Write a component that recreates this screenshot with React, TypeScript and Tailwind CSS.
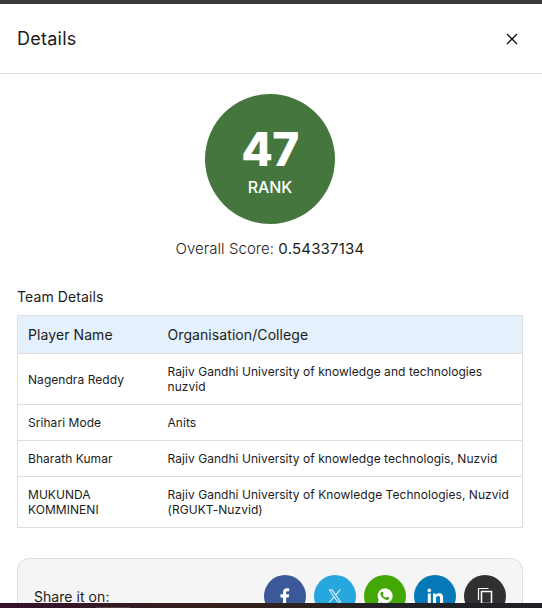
import type { ReactNode } from "react";

const players = [
  { name: "Nagendra Reddy", org: "Rajiv Gandhi University of knowledge and technologies nuzvid", height: "h-[51px]" },
  { name: "Srihari Mode", org: "Anits", height: "h-[36px]" },
  { name: "Bharath Kumar", org: "Rajiv Gandhi University of knowledge technologis, Nuzvid", height: "h-[36px]" },
  { name: "MUKUNDA KOMMINENI", org: "Rajiv Gandhi University of Knowledge Technologies, Nuzvid (RGUKT-Nuzvid)", height: "h-[51px]" },
];

function ShareButton({ label, color, children }: { label: string; color: string; children: ReactNode }) {
  return (
    <button aria-label={label} className={`flex size-[42px] shrink-0 items-center justify-center rounded-full text-white ${color}`}>
      {children}
    </button>
  );
}

export default function App() {
  return (
    <div className="flex h-[608px] w-[542px] flex-col overflow-hidden bg-white font-['Inter',sans-serif] text-[#1c1c1c]">
      <div className="h-1 shrink-0 bg-[#3b3b3b]" />
      <header className="flex h-[70px] shrink-0 items-center justify-between border-b border-[#dadada] pr-6 pl-[17px]">
        <h1 className="text-[18px] tracking-[0.25px]">Details</h1>
        <button aria-label="Close">
          <svg width="12" height="12" viewBox="0 0 12 12" fill="none" stroke="#111" strokeWidth="1.3">
            <path d="M1 1l10 10M11 1L1 11" />
          </svg>
        </button>
      </header>
      <main className="flex h-[529px] shrink-0 flex-col overflow-hidden px-[17px] pt-5 pr-[19px]">
        <div className="flex flex-col items-center">
          <div className="flex size-[130px] flex-col items-center rounded-full bg-[#45763d] pt-[32px] text-white">
            <span className="text-[46px] leading-[46px] font-extrabold tracking-[-0.6px]">47</span>
            <span className="mt-[5px] text-[16px] leading-5 font-medium tracking-[-0.1px]">RANK</span>
          </div>
          <p className="mt-[15px] text-[15px] leading-5 font-light tracking-[0.05px]">
            Overall Score: <span className="font-normal tracking-[0.2px]">0.54337134</span>
          </p>
        </div>
        <h2 className="mt-[28px] text-[14px] leading-5 tracking-[0.1px]">Team Details</h2>
        <div className="mt-[8px] border border-[#dfdfdf]">
          <div className="grid h-[37px] grid-cols-[139.5px_1fr] items-center bg-[#e4f0fc] px-[10px] text-[14px] tracking-[0.08px]">
            <span>Player Name</span>
            <span>Organisation/College</span>
          </div>
          {players.map((p) => (
            <div key={p.name} className={`grid grid-cols-[139.5px_1fr] items-center border-t border-[#dfdfdf] px-[10px] text-[12px] leading-[15px] tracking-[0.05px] ${p.height}`}>
              <span className="pr-10">{p.name}</span>
              <span>{p.org}</span>
            </div>
          ))}
        </div>
        <section className="mt-[30px] flex h-[76px] shrink-0 items-center justify-between rounded-[12px] border border-[#dedede] bg-[#f5f5f5] px-4">
          <span className="text-[14px] tracking-[0.05px]">Share it on:</span>
          <div className="flex gap-2">
            <ShareButton label="Facebook" color="bg-[#3b5998]">
              <svg width="10" height="17" viewBox="0 0 10 17" fill="currentColor">
                <path d="M3 17V9.4H.5V6.3H3V4.2C3 1.7 4.6.3 6.9.3c1.1 0 2 .1 2.3.2v2.7H7.6c-1.2 0-1.5.6-1.5 1.5v1.6h3l-.4 3.1H6.1V17z" />
              </svg>
            </ShareButton>
            <ShareButton label="X" color="bg-[#28a7df]">
              <svg width="14" height="14" viewBox="0 0 24 24" fill="currentColor">
                <path d="M14.1 10.3 22.3 1h-2l-7.1 8.1L7.5 1H.9l8.6 12.2L.9 23h2l7.5-8.6 6 8.6H23zm-2.7 3-.9-1.2L3.6 2.5h3l5.6 7.8.9 1.2 7.3 10.2h-3z" />
              </svg>
            </ShareButton>
            <ShareButton label="WhatsApp" color="bg-[#43a806]">
              <svg width="16" height="16" viewBox="0 0 16 16" fill="currentColor">
                <path d="M.6 15.5 1.7 11.7A7.5 7.5 0 1 1 4.5 14.4z" />
                <path fill="#43a806" d="M5.4 3.7c.3 0 .5.1.6.4l.6 1.5c.1.3 0 .5-.2.7l-.6.7c.7 1.4 1.7 2.2 3.1 2.8l.8-1c.2-.2.4-.2.6-.1l1.6.8c.4.2.3.5.2.9-.3 1-1.3 1.6-2.3 1.5-2.9-.5-5.2-2.5-6.2-4.8-.5-1.1-.2-2.4.7-3.2.3-.2.7-.2 1.1-.2z" />
              </svg>
            </ShareButton>
            <ShareButton label="LinkedIn" color="bg-[#0579b8]">
              <svg width="17" height="16" viewBox="0 0 17 16" fill="currentColor">
                <circle cx="2.3" cy="2.4" r="1.8" />
                <path d="M.8 5.5h3V16h-3zM6 5.5h2.8v1.4c.6-1 1.6-1.7 3.2-1.7 3.3 0 4.1 2 4.1 4.9V16h-3v-5.3c0-1.4-.1-2.8-1.9-2.8S9 9.2 9 10.7V16H6z" />
              </svg>
            </ShareButton>
            <ShareButton label="Copy link" color="bg-[#303030]">
              <svg width="16" height="18" viewBox="0 0 16 18" fill="none" stroke="currentColor">
                <path d="M11.5 1.5H1.5V13" strokeWidth="1.2" />
                <path d="M4.5 4.5h10v12h-10z" strokeWidth="1.5" />
              </svg>
            </ShareButton>
          </div>
        </section>
      </main>
      <div className="flex h-[5px] shrink-0 items-end bg-linear-to-r from-[#34102c] via-[#34201b] via-40% to-[#202124] to-75%">
        <div className="ml-[96px] h-px w-[34px] bg-[#514340]" />
      </div>
    </div>
  );
}
